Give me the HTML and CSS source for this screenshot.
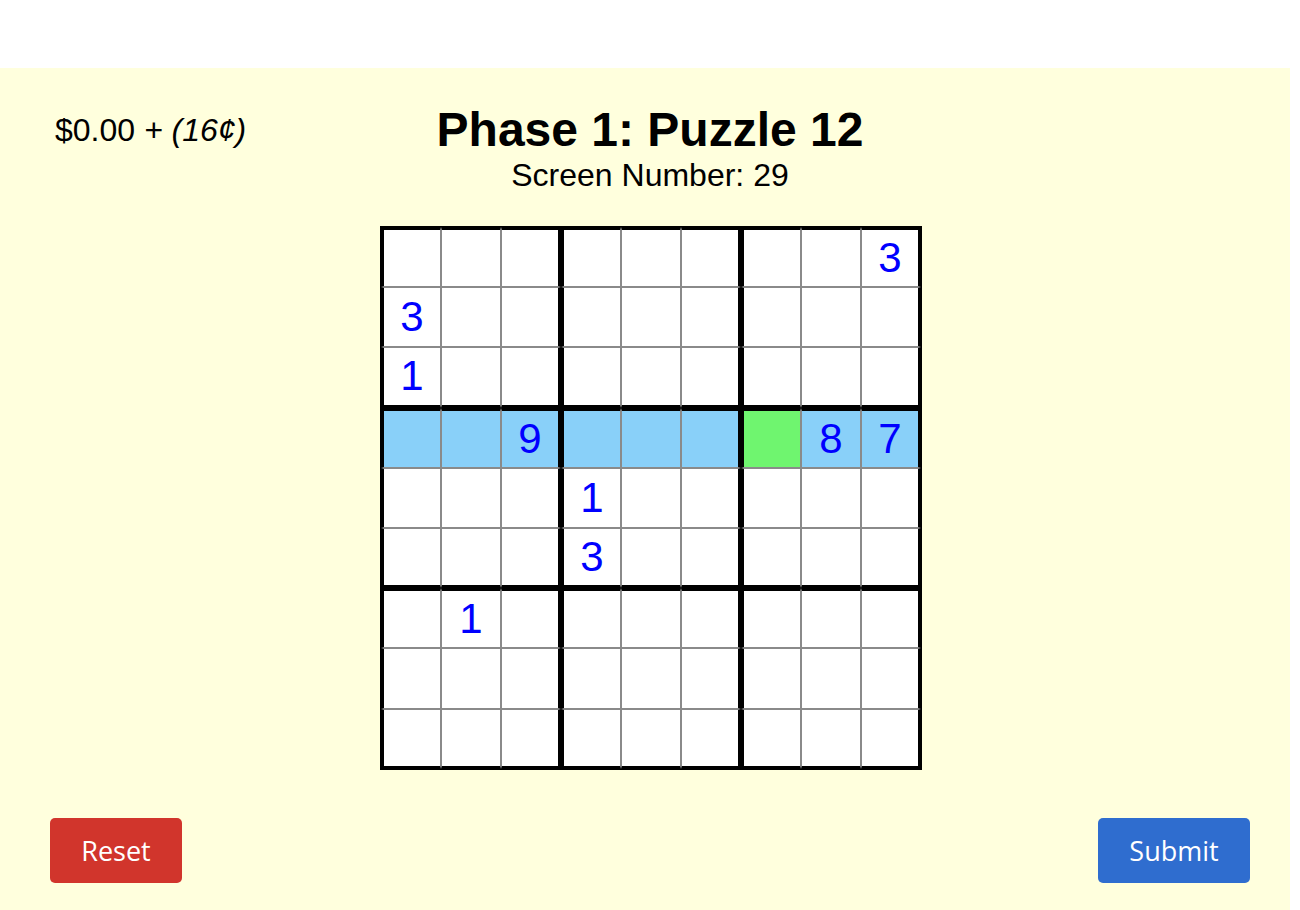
FILE: index.html
```html
<!DOCTYPE html>
<html>
<head>
<meta charset="utf-8">
<link rel="stylesheet" href="styles.css">
</head>
<body>
<div class="panel">
  <div class="content">
    <div class="top">
      <div class="money">$0.00 <i>+ (16¢)</i></div>
      <div class="heading">
        <h1 class="title">Phase 1: Puzzle 12</h1>
        <div class="screen">Screen Number: 29</div>
      </div>
      <div></div>
    </div>
    <div class="board-wrap">
      <div class="board">
        <div class="c bl bt"></div><div class="c bt"></div><div class="c br bt"></div><div class="c bl bt"></div><div class="c bt"></div><div class="c br bt"></div><div class="c bl bt"></div><div class="c bt"></div><div class="c br bt">3</div>
        <div class="c bl">3</div><div class="c"></div><div class="c br"></div><div class="c bl"></div><div class="c"></div><div class="c br"></div><div class="c bl"></div><div class="c"></div><div class="c br"></div>
        <div class="c bl bb">1</div><div class="c bb"></div><div class="c br bb"></div><div class="c bl bb"></div><div class="c bb"></div><div class="c br bb"></div><div class="c bl bb"></div><div class="c bb"></div><div class="c br bb"></div>
        <div class="c hl bl bt"></div><div class="c hl bt"></div><div class="c hl br bt">9</div><div class="c hl bl bt"></div><div class="c hl bt"></div><div class="c hl br bt"></div><div class="c sel bl bt"></div><div class="c hl bt">8</div><div class="c hl br bt">7</div>
        <div class="c bl"></div><div class="c"></div><div class="c br"></div><div class="c bl">1</div><div class="c"></div><div class="c br"></div><div class="c bl"></div><div class="c"></div><div class="c br"></div>
        <div class="c bl bb"></div><div class="c bb"></div><div class="c br bb"></div><div class="c bl bb">3</div><div class="c bb"></div><div class="c br bb"></div><div class="c bl bb"></div><div class="c bb"></div><div class="c br bb"></div>
        <div class="c bl bt"></div><div class="c bt">1</div><div class="c br bt"></div><div class="c bl bt"></div><div class="c bt"></div><div class="c br bt"></div><div class="c bl bt"></div><div class="c bt"></div><div class="c br bt"></div>
        <div class="c bl"></div><div class="c"></div><div class="c br"></div><div class="c bl"></div><div class="c"></div><div class="c br"></div><div class="c bl"></div><div class="c"></div><div class="c br"></div>
        <div class="c bl bb"></div><div class="c bb"></div><div class="c br bb"></div><div class="c bl bb"></div><div class="c bb"></div><div class="c br bb"></div><div class="c bl bb"></div><div class="c bb"></div><div class="c br bb"></div>
      </div>
    </div>
    <div class="actions">
      <button class="btn reset">Reset</button>
      <button class="btn submit">Submit</button>
    </div>
  </div>
</div>
</body>
</html>
```
FILE: styles.css
```css
html, body {
  margin: 0;
  padding: 0;
  background: #ffffff;
}
body {
  width: 1300px;
  height: 910px;
  overflow: hidden;
  font-family: "Liberation Sans", Arial, sans-serif;
  color: #000;
}
.panel {
  margin-top: 68px;
  width: 1290px;
  height: 842px;
  background: #ffffdd;
}
.content {
  width: 1300px;
  padding-top: 35px;
}
.top {
  display: grid;
  grid-template-columns: 1fr auto 1fr;
  align-items: start;
}
.money {
  font-size: 32px;
  line-height: 36px;
  padding-left: 55px;
  margin-top: 9px;
}
.heading {
  text-align: center;
}
.title {
  margin: 0;
  font-size: 48px;
  font-weight: bold;
  line-height: 54px;
}
.screen {
  font-size: 32px;
  line-height: 36px;
}
.board-wrap {
  display: flex;
  justify-content: center;
  padding-left: 2px;
  margin-top: 33px;
}
.board {
  display: grid;
  grid-template-columns: repeat(9, 60px);
  grid-template-rows: repeat(9, 60.2px);
  border: 1px solid #000;
  background: #ffffff;
}
.c {
  box-sizing: border-box;
  border: 1px solid #8a8a8a;
  display: flex;
  align-items: center;
  justify-content: center;
  font-size: 42px;
  color: #0000ff;
  background: #ffffff;
}
.c.bl { border-left: 3px solid #000; }
.c.br { border-right: 3px solid #000; }
.c.bt { border-top: 3px solid #000; }
.c.bb { border-bottom: 3px solid #000; }
.c.hl { background: #89d0f9; }
.c.sel { background: #6ff56f; }
.actions {
  display: flex;
  justify-content: space-between;
  padding: 0 50px;
  margin-top: 48px;
}
.btn {
  font-family: "Open Sans", "Noto Sans", sans-serif;
  font-size: 27px;
  color: #ffffff;
  border: none;
  border-radius: 5px;
  height: 65px;
  padding: 0;
  cursor: pointer;
}
.reset {
  width: 132px;
  background: #d1352c;
}
.submit {
  width: 152px;
  background: #2f6dcf;
}
```
